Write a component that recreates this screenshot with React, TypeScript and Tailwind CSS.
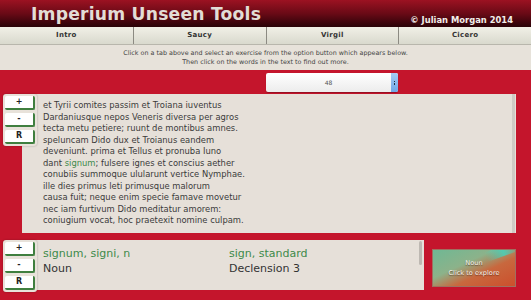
import React from "react";

const lines = [
  "et Tyrii comites passim et Troiana iuventus",
  "Dardaniusque nepos Veneris diversa per agros",
  "tecta metu petiere; ruunt de montibus amnes.",
  "speluncam Dido dux et Troianus eandem",
  "deveniunt. prima et Tellus et pronuba Iuno",
  "SIGNUM",
  "conubiis summoque ulularunt vertice Nymphae.",
  "ille dies primus leti primusque malorum",
  "causa fuit; neque enim specie famave movetur",
  "nec iam furtivum Dido meditatur amorem:",
  "coniugium vocat, hoc praetexit nomine culpam.",
];

const tabs = ["Intro", "Saucy", "Virgil", "Cicero"];

function ZoomButtons() {
  return (
    <div className="z-10 flex w-[34px] flex-col gap-[3px] rounded-[3px] bg-[#e8e2da] p-[2px] shadow-[0_0_2px_rgba(0,0,0,0.3)]">
      {["+", "-", "R"].map((b) => (
        <div
          key={b}
          className="flex h-[14px] items-center justify-center rounded-[2px] border-r-2 border-b-2 border-[#3f7f3f] bg-white text-[8px] font-bold text-[#222]"
        >
          {b}
        </div>
      ))}
    </div>
  );
}

export default function App() {
  return (
    <div className="flex h-[300px] w-[531px] flex-col overflow-hidden bg-[#c4152c] font-['DejaVu_Sans',sans-serif]">
      <header className="flex h-[27px] items-end bg-gradient-to-b from-[#9c1222] via-[#6a0a16] to-[#2a0308]">
        <h1 className="mb-[4px] pl-[31px] text-[17.2px] font-bold leading-none tracking-[0.2px] text-[#e2ddd6]">
          Imperium Unseen Tools
        </h1>
        <span className="mb-[3px] ml-auto pr-[18px] text-[8.4px] font-bold leading-none text-[#f2eeea]">
          © Julian Morgan 2014
        </span>
      </header>

      <nav className="grid h-[18px] grid-cols-4 border-b border-[#b8b6ac] bg-gradient-to-b from-[#f1f0e7] to-[#d9d9cd]">
        {tabs.map((t, i) => (
          <div
            key={t}
            className={`flex items-center justify-center text-[7px] font-semibold tracking-[0.3px] text-[#333] ${
              i > 0 ? "border-l border-[#8c8a82]" : ""
            }`}
          >
            {t}
          </div>
        ))}
      </nav>

      <div className="flex h-[25px] flex-col items-center justify-center bg-[#e7e2da] text-[6.4px] leading-[9px] text-[#444]">
        <p>Click on a tab above and select an exercise from the option button which appears below.</p>
        <p>Then click on the words in the text to find out more.</p>
      </div>

      <div className="ml-[266px] mt-[3px] flex h-[19px] w-[132px] overflow-hidden rounded-[2px] bg-gradient-to-b from-white to-[#ececec] shadow-[0_1px_1px_rgba(0,0,0,0.25)]">
        <div className="flex flex-1 items-center justify-center text-[6px] text-[#555]">48</div>
        <div className="flex w-[7px] flex-col items-center justify-center gap-[1px] bg-gradient-to-b from-[#a6ccf4] to-[#6fa6e6]">
          <span className="h-[1.5px] w-[1.5px] bg-[#234]" />
          <span className="h-[1.5px] w-[1.5px] bg-[#234]" />
        </div>
      </div>

      <div className="mt-[2px] flex items-start pl-[3px]">
        <ZoomButtons />
        <div className="-ml-[15px] flex h-[139px] w-[494px] bg-[#e6e0d9]">
          <div className="flex-1 pl-[21px] pt-[6px] text-[8.4px] leading-[11.5px] text-[#3a3a3a]">
            {lines.map((l, i) =>
              l === "SIGNUM" ? (
                <p key={i}>
                  dant <span className="text-[#3d8a4a]">signum</span>; fulsere ignes et conscius aether
                </p>
              ) : (
                <p key={i}>{l}</p>
              )
            )}
          </div>
          <div className="mr-[1px] w-[3px] bg-[#cfcac4]" />
        </div>
      </div>

      <div className="mt-[7px] flex items-start pl-[3px]">
        <ZoomButtons />
        <div className="-ml-[15px] flex h-[50px] w-[402px] bg-[#e6e0d9]">
          <div className="flex flex-1 pl-[21px] pt-[6px] text-[11px] leading-[15px]">
            <div className="w-[186px]">
              <p className="text-[#3d8a4a]">signum, signi, n</p>
              <p className="text-[#333]">Noun</p>
            </div>
            <div>
              <p className="text-[#3d8a4a]">sign, standard</p>
              <p className="text-[#333]">Declension 3</p>
            </div>
          </div>
          <div className="mr-[2px] mt-[1px] h-[24px] w-[3px] rounded-full bg-[#bdb8b2]" />
        </div>
        <div className="relative ml-[8px] mt-[9px] flex h-[38px] w-[84px] flex-col items-center justify-center overflow-hidden border border-[#a07060] bg-[linear-gradient(155deg,#6fb894_0%,#8cb28a_38%,#c8683e_62%,#cc4f2c_100%)] text-[6.6px] leading-[10px] [text-shadow:0_1px_1px_rgba(60,20,10,0.6)]">
          <span className="absolute -right-[6px] -top-[4px] h-[10px] w-[36px] rotate-[-20deg] bg-gradient-to-r from-transparent via-[#3fd6c0] to-transparent opacity-80" />
          <span className="relative text-[#f4f4ee]">Noun</span>
          <span className="relative text-[#f4f4ee]">Click to explore</span>
        </div>
      </div>
    </div>
  );
}
